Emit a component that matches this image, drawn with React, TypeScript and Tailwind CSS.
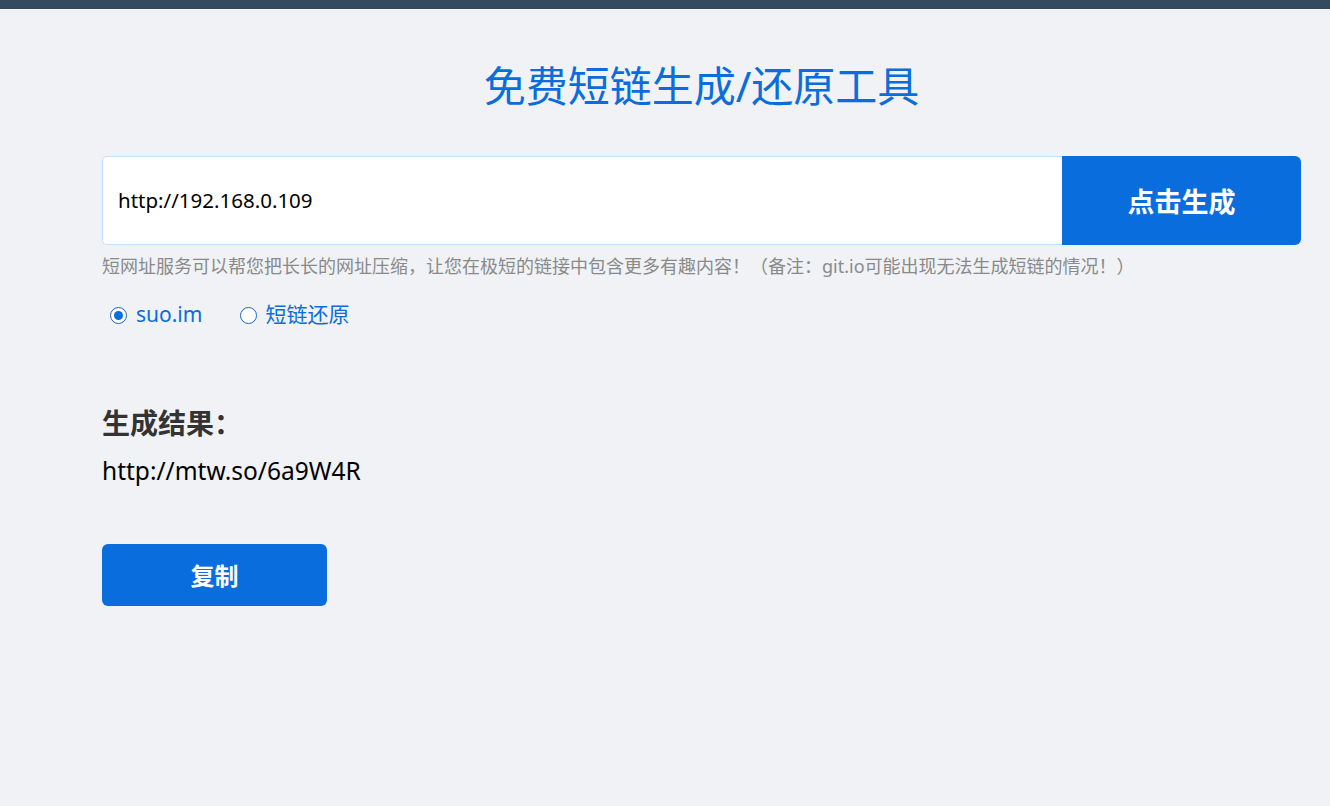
import React from "react";

export default function App() {
  const cjk = { fontFamily: '"Noto Sans", "Noto Sans CJK SC", sans-serif' };
  return (
    <div className="min-h-[806px] w-full bg-[#f0f2f5]" style={cjk}>
      <div className="h-[9px] bg-[#344a5f]" />
      <div className="pl-[102px] pr-[29px]">
        <h1 className="mt-[52px] text-center text-[42px] leading-[50px] font-normal text-[#0a6ddd]">
          免费短链生成/还原工具
        </h1>
        <div className="mt-[45px] flex h-[89px]">
          <div className="flex flex-1 items-center rounded-l-[5px] border border-r-0 border-[#c3e0fb] bg-white pl-[15px] text-[20.5px] text-black">
            http://192.168.0.109
          </div>
          <button className="w-[239px] rounded-r-[6px] bg-[#0a6ddd] pt-[4px] text-[27px] font-bold text-white">
            点击生成
          </button>
        </div>
        <p className="mt-[10px] text-[18px] leading-[22px] text-[#8a8a8a]">
          短网址服务可以帮您把长长的网址压缩，让您在极短的链接中包含更多有趣内容！（备注：git.io可能出现无法生成短链的情况！）
        </p>
        <div className="mt-[26px] flex h-[24px] items-center pl-[8px] text-[21px] text-[#0a6ddd]">
          <span className="flex h-[17px] w-[17px] items-center justify-center rounded-full border border-[#1c63c0] bg-white">
            <span className="h-[9px] w-[9px] rounded-full bg-[#0a6ddd]" />
          </span>
          <span className="ml-[9px]">suo.im</span>
          <span className="ml-[38px] h-[17px] w-[17px] rounded-full border border-[#1c63c0] bg-white" />
          <span className="ml-[8px]">短链还原</span>
        </div>
        <h2 className="mt-[79px] text-[28px] leading-[34px] font-bold text-[#333]">生成结果：</h2>
        <div className="mt-[16px] text-[24.5px] leading-[29px] text-black">http://mtw.so/6a9W4R</div>
        <button className="mt-[59px] h-[62px] w-[225px] rounded-[6px] bg-[#0a6ddd] pt-[2px] text-[24px] font-bold text-white">
          复制
        </button>
      </div>
    </div>
  );
}
